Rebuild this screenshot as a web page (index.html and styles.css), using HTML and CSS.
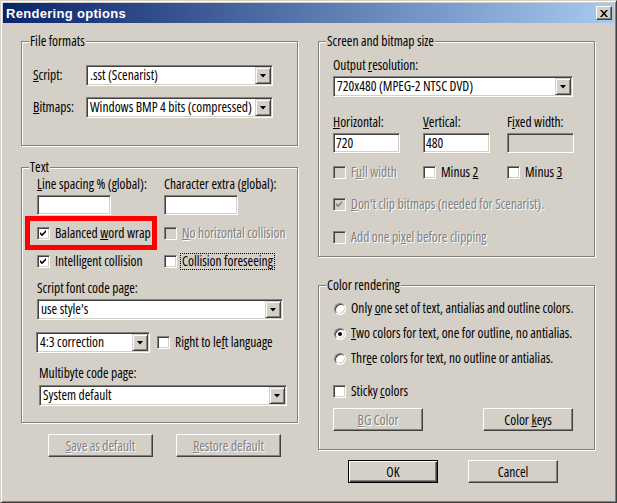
FILE: index.html
```html
<!DOCTYPE html>
<html>
<head>
<meta charset="utf-8">
<link rel="stylesheet" href="styles.css">
</head>
<body>
<div class="window">
  <div class="titlebar">
    <span class="title">Rendering options</span>
    <span class="close"><svg width="8" height="7" viewBox="0 0 8 7"><path d="M0 0h2l2 2.4 2-2.4h2l-3 3.5 3 3.5h-2l-2-2.4-2 2.4h-2l3-3.5z" fill="#000"/></svg></span>
  </div>
  <div class="content">
    <div class="col">
      <div class="group g-files">
        <span class="legend">File formats</span>
        <div class="ff-grid">
          <span class="lbl"><u>S</u>cript:</span>
          <div class="select w187"><span class="val">.sst (Scenarist)</span><span class="drop"></span></div>
          <span class="lbl"><u>B</u>itmaps:</span>
          <div class="select w187"><span class="val">Windows BMP 4 bits (compressed)</span><span class="drop"></span></div>
        </div>
      </div>

      <div class="group g-text">
        <span class="legend">Text</span>
        <div class="mark"></div>
        <div class="two">
          <span class="lbl"><u>L</u>ine spacing % (global):</span>
          <span class="lbl">Character extra (global):</span>
        </div>
        <div class="two mt3">
          <div class="inp w74"></div>
          <div class="inp w74"></div>
        </div>
        <div class="two mt11">
          <div class="chk"><span class="cb"><svg class="tick" width="11" height="11" viewBox="1 1 11 11"><path d="M3 5l2 2 4-4v2.2l-4 4-2-2z" fill="#000"/></svg></span><span>Balanced <u>w</u>ord wrap</span></div>
          <div class="chk dis"><span class="cb off"></span><span><u>N</u>o horizontal collision</span></div>
        </div>
        <div class="two mt13">
          <div class="chk"><span class="cb"><svg class="tick" width="11" height="11" viewBox="1 1 11 11"><path d="M3 5l2 2 4-4v2.2l-4 4-2-2z" fill="#000"/></svg></span><span>Intelligent collision</span></div>
          <div class="chk"><span class="cb"></span><span class="focus">Collision foreseeing</span></div>
        </div>
        <span class="lbl mt12">Script font code page:</span>
        <div class="select w246 mt3"><span class="val">use style's</span><span class="drop"></span></div>
        <div class="row43 mt12">
          <div class="select w114"><span class="val">4:3 correction</span><span class="drop"></span></div>
          <div class="chk"><span class="cb"></span><span>Right to le<u>f</u>t language</span></div>
        </div>
        <span class="lbl mt13 ml2">Multibyte code page:</span>
        <div class="select w248 mt4 ml2"><span class="val">System default</span><span class="drop"></span></div>
      </div>

      <div class="btnrow brl">
        <div class="btn dis w105"><span><u>S</u>ave as default</span></div>
        <div class="btn dis w105"><span><u>R</u>estore default</span></div>
      </div>
    </div>

    <div class="col">
      <div class="group g-screen">
        <span class="legend">Screen and bitmap size</span>
        <span class="lbl">Output <u>r</u>esolution:</span>
        <div class="select w240 mt3"><span class="val">720x480 (MPEG-2 NTSC DVD)</span><span class="drop"></span></div>
        <div class="three mt18">
          <span class="lbl"><u>H</u>orizontal:</span>
          <span class="lbl"><u>V</u>ertical:</span>
          <span class="lbl">F<u>i</u>xed width:</span>
        </div>
        <div class="three mt3">
          <div class="inp w67"><span class="ival">720</span></div>
          <div class="inp w67"><span class="ival">480</span></div>
          <div class="inp w67 off"></div>
        </div>
        <div class="three mt12">
          <div class="chk dis"><span class="cb off"></span><span>F<u>u</u>ll width</span></div>
          <div class="chk"><span class="cb"></span><span>Minus <u>2</u></span></div>
          <div class="chk"><span class="cb"></span><span>Minus <u>3</u></span></div>
        </div>
        <div class="chk dis mt17"><span class="cb off"><svg class="tick" width="11" height="11" viewBox="1 1 11 11"><path d="M3 5l2 2 4-4v2.2l-4 4-2-2z" fill="#808080"/></svg></span><span><u>D</u>on't clip bitmaps (needed for Scenarist).</span></div>
        <div class="chk dis mt18"><span class="cb off"></span><span>Add one pi<u>x</u>el before clipping</span></div>
      </div>

      <div class="group g-color">
        <span class="legend">Color rendering</span>
        <div class="radio"><span class="rb"></span><span>Only <u>o</u>ne set of text, antialias and outline colors.</span></div>
        <div class="radio mt10"><span class="rb on"></span><span><u>T</u>wo colors for text, one for outline, no antialias.</span></div>
        <div class="radio mt10"><span class="rb"></span><span>Thr<u>e</u>e colors for text, no outline or antialias.</span></div>
        <div class="chk mt18"><span class="cb"></span><span>Sticky <u>c</u>olors</span></div>
        <div class="cbtns mt9">
          <div class="btn dis w90 h24"><span><u>B</u>G Color</span></div>
          <div class="btn w90 h24"><span>Color <u>k</u>eys</span></div>
        </div>
      </div>

      <div class="btnrow brr">
        <div class="btn def w90"><span>OK</span></div>
        <div class="btn w90"><span>Cancel</span></div>
      </div>
    </div>
  </div>
</div>
</body>
</html>
```

FILE: styles.css
```css
body {
  margin: 0;
  background: #d4d0c8;
  font-family: "Open Sans", "Liberation Sans", sans-serif;
  font-stretch: 75%;
  font-size: 13.5px;
  color: #000;
}

u { text-underline-offset: 1px; }

.window {
  width: 617px;
  height: 503px;
  box-sizing: border-box;
  border: 1px solid;
  border-color: #d4d0c8 #404040 #404040 #d4d0c8;
  box-shadow: inset 1px 1px #fff, inset -1px -1px #808080;
  padding: 2px;
  background: #d4d0c8;
}

.titlebar {
  height: 20px;
  background: linear-gradient(to right, #0a246a, #a6caf0);
  display: flex;
  align-items: center;
  justify-content: space-between;
  padding: 0 2px 0 3px;
}

.title {
  font-family: "Liberation Sans", Arial, sans-serif;
  font-stretch: 100%;
  font-weight: bold;
  font-size: 13px;
  letter-spacing: 0.3px;
  color: #fff;
}

.close {
  width: 16px;
  height: 14px;
  box-sizing: border-box;
  background: #d4d0c8;
  border: 1px solid;
  border-color: #fff #404040 #404040 #fff;
  box-shadow: inset -1px -1px #808080, inset 1px 1px #d4d0c8;
  display: grid;
  place-items: center;
}

.content {
  display: flex;
  gap: 20px;
  padding: 18px 0 0 18px;
}

.col {
  display: flex;
  flex-direction: column;
  width: 277px;
}

.group {
  position: relative;
  box-sizing: border-box;
  border: 1px solid #808080;
  box-shadow: inset 1px 1px #fff, 1px 1px #fff;
  display: flex;
  flex-direction: column;
  align-items: flex-start;
}

.legend {
  position: absolute;
  top: -8px;
  left: 7px;
  padding: 0 1px;
  background: #d4d0c8;
  line-height: 15px;
}

.lbl {
  line-height: 15px;
  height: 15px;
  white-space: nowrap;
}

.g-files { height: 105px; padding: 23px 0 0 11px; }
.g-text { height: 256px; padding: 9px 0 0 15px; margin-top: 21px; }
.g-screen { height: 216px; padding: 16px 0 0 14px; }
.g-color { height: 165px; padding: 15px 0 0 14px; margin-top: 28px; }

.ff-grid {
  display: grid;
  grid-template-columns: 53px 187px;
  row-gap: 11px;
  align-items: center;
}

.two {
  display: grid;
  grid-template-columns: 127px auto;
  align-items: center;
}

.three {
  display: grid;
  grid-template-columns: 90px 84px auto;
  align-items: center;
}

.row43 {
  display: flex;
  align-items: center;
  gap: 7px;
  margin-left: -1px;
}

.mt3 { margin-top: 3px; }
.mt4 { margin-top: 4px; }
.mt9 { margin-top: 9px; }
.mt10 { margin-top: 10px; }
.mt11 { margin-top: 11px; }
.mt12 { margin-top: 12px; }
.mt13 { margin-top: 13px; }
.mt17 { margin-top: 17px; }
.mt18 { margin-top: 18px; }
.ml2 { margin-left: 2px; }

/* sunken fields */
.select, .inp {
  box-sizing: border-box;
  border: 1px solid;
  border-color: #808080 #fff #fff #808080;
  box-shadow: inset 1px 1px #404040, inset -1px -1px #d4d0c8;
  background: #fff;
}

.select {
  height: 21px;
  display: flex;
  padding: 1px;
}

.val {
  flex: 1;
  padding-left: 2px;
  line-height: 17px;
  white-space: nowrap;
  overflow: hidden;
}

.drop {
  width: 16px;
  box-sizing: border-box;
  background: #d4d0c8;
  border: 1px solid;
  border-color: #d4d0c8 #404040 #404040 #d4d0c8;
  box-shadow: inset 1px 1px #fff, inset -1px -1px #808080;
  display: grid;
  place-items: center;
}

.drop::after {
  content: "";
  width: 7px;
  height: 4px;
  background: #000;
  clip-path: polygon(0 0, 100% 0, 50% 100%);
}

.inp {
  height: 20px;
  display: flex;
  align-items: center;
}

.inp.off { background: #d4d0c8; }

.ival { padding-left: 2px; line-height: 16px; }

.w74 { width: 74px; }
.w67 { width: 67px; }
.w90 { width: 90px; }
.w105 { width: 105px; }
.w114 { width: 114px; }
.w187 { width: 187px; }
.w240 { width: 240px; }
.w246 { width: 246px; }
.w248 { width: 248px; }
.h24 { height: 24px; }

/* checkboxes */
.chk {
  display: flex;
  align-items: center;
  gap: 5px;
  height: 15px;
  line-height: 15px;
  white-space: nowrap;
}

.cb {
  width: 13px;
  height: 13px;
  flex: none;
  box-sizing: border-box;
  border: 1px solid;
  border-color: #808080 #fff #fff #808080;
  box-shadow: inset 1px 1px #404040, inset -1px -1px #d4d0c8;
  background: #fff;
  display: block;
}

.cb.off { background: #d4d0c8; }

.tick { display: block; }

.dis { color: #808080; text-shadow: 1px 1px #fff; }

.focus {
  outline: 1px dotted #000;
  outline-offset: 0;
  padding: 0 1px;
  margin-left: -1px;
}

/* radios */
.radio {
  display: flex;
  align-items: center;
  gap: 5px;
  height: 15px;
  line-height: 15px;
  white-space: nowrap;
  margin-left: 1px;
}

.rb {
  width: 12px;
  height: 12px;
  flex: none;
  box-sizing: border-box;
  border-radius: 50%;
  border: 1px solid;
  border-color: #808080 #fff #fff #808080;
  box-shadow: inset 1px 1px #404040, inset -1px -1px #d4d0c8;
  background: #fff;
  display: grid;
  place-items: center;
}

.rb.on::after {
  content: "";
  width: 4px;
  height: 4px;
  border-radius: 50%;
  background: #000;
}

/* buttons */
.btn {
  height: 23px;
  box-sizing: border-box;
  background: #d4d0c8;
  border: 1px solid;
  border-color: #fff #404040 #404040 #fff;
  box-shadow: inset -1px -1px #808080, inset 1px 1px #d4d0c8;
  display: flex;
  align-items: center;
  justify-content: center;
  white-space: nowrap;
}

.btn.def {
  border: 1px solid #000;
  box-shadow: inset 1px 1px #fff, inset -1px -1px #404040, inset -2px -2px #808080;
}

.btnrow { display: flex; }
.brl { margin: 11px 0 0 27px; gap: 23px; }
.brr { margin: 10px 0 0 30px; gap: 30px; }

.cbtns {
  width: 240px;
  display: flex;
  justify-content: space-between;
}

/* red annotation box over the dialog */
.mark {
  position: absolute;
  left: 3px;
  top: 48px;
  width: 132px;
  height: 34px;
  box-sizing: border-box;
  border: 5px solid #ff0000;
  pointer-events: none;
}
```
